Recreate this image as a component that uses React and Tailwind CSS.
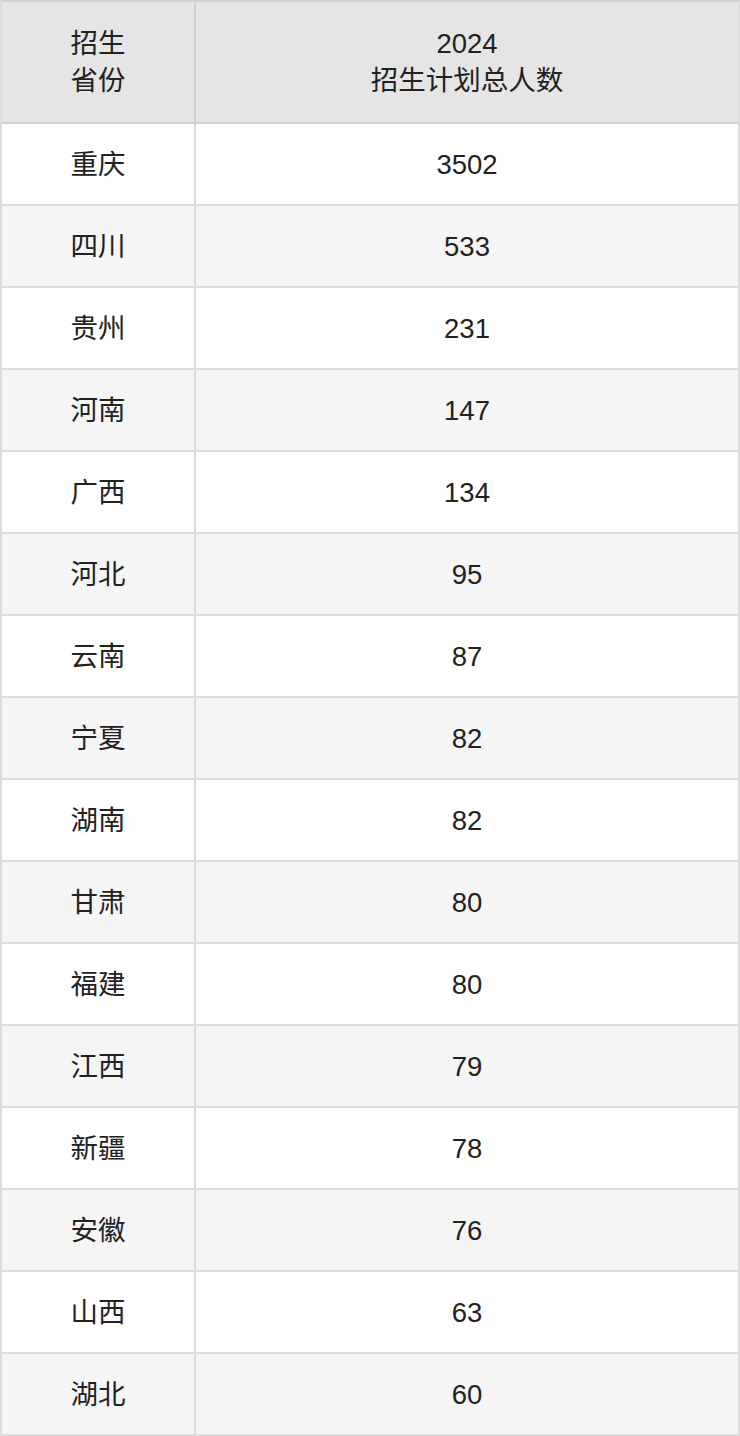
import React from 'react';

const rows = [
  ['重庆', '3502'],
  ['四川', '533'],
  ['贵州', '231'],
  ['河南', '147'],
  ['广西', '134'],
  ['河北', '95'],
  ['云南', '87'],
  ['宁夏', '82'],
  ['湖南', '82'],
  ['甘肃', '80'],
  ['福建', '80'],
  ['江西', '79'],
  ['新疆', '78'],
  ['安徽', '76'],
  ['山西', '63'],
  ['湖北', '60'],
];

export default function App() {
  return (
    <div className="w-[740px] bg-white text-[#222] text-[27.5px] leading-[37px] font-['Liberation_Sans','Noto_Sans_CJK_SC',sans-serif]">
      <div className="border-2 border-b-0 border-t-[#cfcfcf] border-x-[#dcdcdc]">
        <div className="flex h-[122px] bg-[#e5e5e5] border-b-2 border-[#cfcfcf]">
          <div className="w-[194px] shrink-0 border-r-2 border-[#cfcfcf] flex flex-col items-center justify-center">
            <span>招生</span>
            <span>省份</span>
          </div>
          <div className="flex-1 flex flex-col items-center justify-center">
            <span>2024</span>
            <span>招生计划总人数</span>
          </div>
        </div>
        {rows.map(([prov, num], i) => (
          <div
            key={prov + i}
            className={`flex h-[82px] border-b-2 border-[#dcdcdc] ${i % 2 === 1 ? 'bg-[#f5f5f5]' : 'bg-white'}`}
          >
            <div className="w-[194px] shrink-0 border-r-2 border-[#dcdcdc] flex items-center justify-center">
              {prov}
            </div>
            <div className="flex-1 flex items-center justify-center">{num}</div>
          </div>
        ))}
      </div>
    </div>
  );
}
